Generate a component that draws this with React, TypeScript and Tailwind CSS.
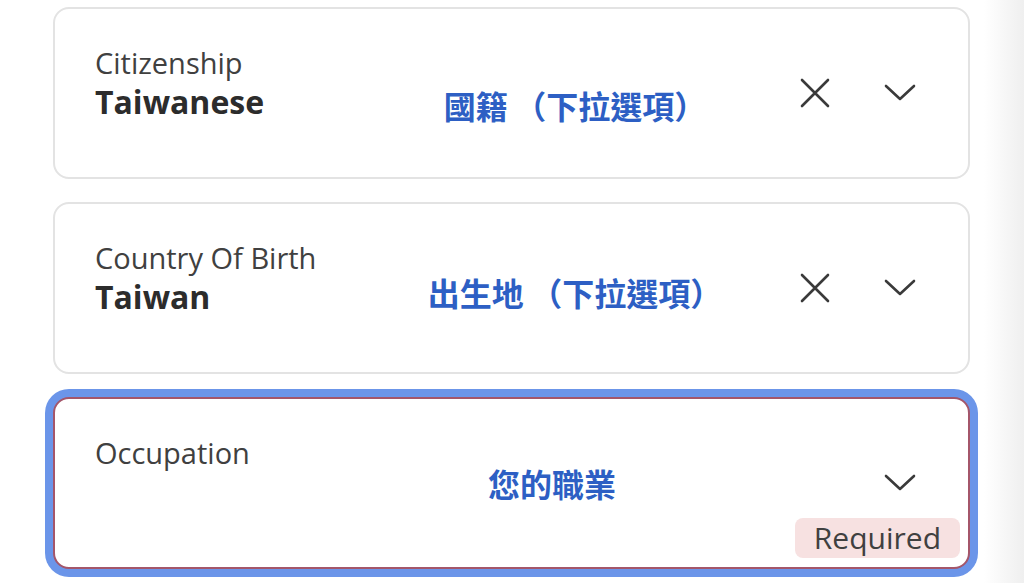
const XIcon = () => (
  <svg width="30" height="30" viewBox="0 0 30 30" fill="none" stroke="#3a3a3a" strokeWidth="2.6" strokeLinecap="round">
    <path d="M2 2 L28 28 M28 2 L2 28" />
  </svg>
);

const Chevron = () => (
  <svg width="32" height="20" viewBox="0 0 32 20" fill="none" stroke="#3a3a3a" strokeWidth="2.6" strokeLinecap="round" strokeLinejoin="round">
    <path d="M2 3 L16 16 L30 3" />
  </svg>
);

// each glyph in its own cell; the opening bracket gets a slightly wider one, as in the screenshot
const Note = ({ text }: { text: string }) => (
  <>
    {text.split("").map((ch, i) => (
      <span key={i} className={`inline-block ${ch === "（" ? "w-[1.2em] text-right" : "w-[1em] text-left"}`}>
        {ch}
      </span>
    ))}
  </>
);

type FieldProps = {
  label: string;
  value?: string;
  note: string;
  noteClass: string;
  clearable?: boolean;
  error?: boolean;
};

const Field = ({ label, value, note, noteClass, clearable, error }: FieldProps) => {
  const box = error
    ? "border-2 border-[#a4566a] shadow-[0_0_0_8px_#6b95e9]"
    : "border-2 border-[#e3e3e3]";
  return (
    <div className={`relative flex h-[172px] w-[917px] items-center rounded-[16px] bg-white pl-[40px] ${box}`}>
      <div className="flex w-[330px] flex-col self-start pt-[36px]">
        <span className="text-[29px] leading-[36px] text-[#404040]">{label}</span>
        {value && (
          <span className="mt-[1px] text-[32px] font-bold leading-[40px] text-[#2c2c2c]">{value}</span>
        )}
      </div>
      <div
        className={`w-[300px] whitespace-nowrap text-center text-[32px] font-bold text-[#2d5fc4] ${noteClass}`}
        style={{ fontFamily: '"Noto Sans CJK TC", sans-serif' }}
      >
        <Note text={note} />
      </div>
      <div className="ml-[75px] flex w-[30px] justify-center">{clearable && <XIcon />}</div>
      <div className="ml-[54px] flex w-[32px] justify-center">
        <Chevron />
      </div>
      {error && (
        <div className="absolute bottom-[9px] right-[8px] rounded-[8px] bg-[#f7e1e1] px-[19px] py-[2px] text-[30px] leading-[36px] text-[#404040]">
          Required
        </div>
      )}
    </div>
  );
};

export default function App() {
  return (
    <div className="flex h-[583px] w-[1024px] overflow-hidden bg-white" style={{ fontFamily: '"Open Sans", sans-serif' }}>
      <div className="flex flex-col gap-[23px] pl-[53px] pt-[7px]">
        <Field label="Citizenship" value="Taiwanese" note="國籍（下拉選項）" noteClass="pt-[24px]" clearable />
        <Field label="Country Of Birth" value="Taiwan" note="出生地（下拉選項）" noteClass="pt-[8px]" clearable />
        <Field label="Occupation" note="您的職業" noteClass="pr-[46px]" error />
      </div>
      <div className="ml-auto h-full w-[40px] bg-gradient-to-r from-white to-[#efefef]" />
    </div>
  );
}
